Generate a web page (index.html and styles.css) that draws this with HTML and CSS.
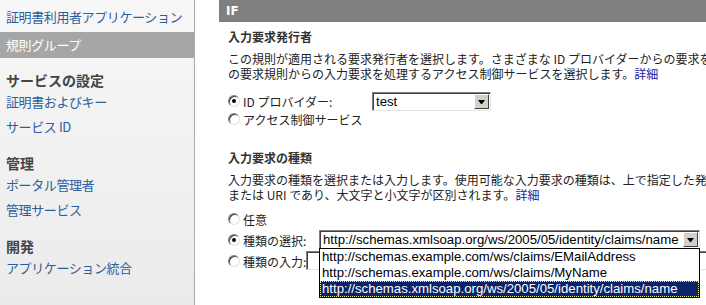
FILE: index.html
```html
<!DOCTYPE html>
<html lang="ja">
<head>
    <meta charset="UTF-8">
    <meta name="viewport" content="width=device-width, initial-scale=1.0">
    <title>規則グループ</title>
    <link rel="stylesheet" href="styles.css">
</head>
<body>
    <div class="page">
        <div class="sidebar">
            <a class="nav-link first" href="#">証明書利用者アプリケーション</a>
            <a class="nav-link selected" href="#">規則グループ</a>
            <div class="nav-group">
                <div class="nav-title">サービスの設定</div>
                <a class="nav-link" href="#">証明書およびキー</a>
                <a class="nav-link" href="#">サービス ID</a>
            </div>
            <div class="nav-group">
                <div class="nav-title">管理</div>
                <a class="nav-link" href="#">ポータル管理者</a>
                <a class="nav-link" href="#">管理サービス</a>
            </div>
            <div class="nav-group">
                <div class="nav-title">開発</div>
                <a class="nav-link" href="#">アプリケーション統合</a>
            </div>
        </div>

        <div class="main">
            <div class="section-bar">IF</div>
            <div class="content">
                <h2>入力要求発行者</h2>
                <p class="desc">
                    この規則が適用される要求発行者を選択します。さまざまな ID プロバイダーからの要求を処理する場合は ID プロバイダーを、他<br>
                    の要求規則からの入力要求を処理するアクセス制御サービスを選択します。<a href="#">詳細</a>
                </p>

                <div class="options issuer">
                    <div class="option-row tall">
                        <span class="radio checked"></span>
                        <span class="label">ID プロバイダー:</span>
                        <div class="select select-small">
                            <span class="select-text">test</span>
                            <span class="select-arrow"></span>
                        </div>
                    </div>
                    <div class="option-row">
                        <span class="radio"></span>
                        <span class="label">アクセス制御サービス</span>
                    </div>
                </div>

                <h2 class="second">入力要求の種類</h2>
                <p class="desc">
                    入力要求の種類を選択または入力します。使用可能な入力要求の種類は、上で指定した発行者から提供される文字列<br>
                    または URI であり、大文字と小文字が区別されます。<a href="#">詳細</a>
                </p>

                <div class="options claim-type">
                    <div class="option-row wide">
                        <span class="radio"></span>
                        <span class="label">任意</span>
                    </div>
                    <div class="option-row wide">
                        <span class="radio checked"></span>
                        <span class="label">種類の選択:</span>
                        <div class="select select-wide">
                            <span class="select-text">http://schemas.xmlsoap.org/ws/2005/05/identity/claims/name</span>
                            <span class="select-arrow"></span>
                            <div class="dropdown">
                                <div class="dropdown-item">http://schemas.example.com/ws/claims/EMailAddress</div>
                                <div class="dropdown-item">http://schemas.example.com/ws/claims/MyName</div>
                                <div class="dropdown-item active">http://schemas.xmlsoap.org/ws/2005/05/identity/claims/name</div>
                            </div>
                        </div>
                    </div>
                    <div class="option-row wide">
                        <span class="radio"></span>
                        <span class="label">種類の入力:</span>
                        <div class="text-input"></div>
                    </div>
                </div>
            </div>
        </div>
    </div>
</body>
</html>
```

FILE: styles.css
```css
html, body {
    margin: 0;
    padding: 0;
    overflow: hidden;
}
body {
    font-family: "Noto Sans CJK JP", "Liberation Sans", sans-serif;
    font-size: 12px;
    color: #222;
    background: #fff;
}
.page {
    display: flex;
    width: 706px;
    height: 305px;
}

/* sidebar */
.sidebar {
    flex: none;
    width: 194px;
    padding-top: 4px;
    border-right: 1px solid #a9a9a9;
    background: linear-gradient(#f7f7f7, #ebebeb);
}
.nav-link {
    display: block;
    height: 25px;
    line-height: 25px;
    padding-left: 6px;
    font-size: 13px;
    letter-spacing: -0.4px;
    color: #2a5f9e;
    text-decoration: none;
    white-space: nowrap;
}
.nav-link.first {
    height: 26px;
    line-height: 26px;
}
.nav-link.selected {
    margin-top: 2px;
    height: 26px;
    line-height: 26px;
    background: #a6a6a6;
    color: #fff;
}
.nav-group {
    margin-top: 15px;
}
.nav-group:first-of-type {
    margin-top: 13px;
}
.nav-title {
    height: 18px;
    line-height: 18px;
    padding-left: 6px;
    font-size: 14px;
    font-weight: bold;
    color: #444;
}

/* main */
.main {
    flex: 1;
    min-width: 0;
    padding-left: 24px;
    overflow: hidden;
}
.section-bar {
    height: 22px;
    line-height: 22px;
    padding-left: 7px;
    background: #808080;
    color: #fff;
    font-family: "DejaVu Sans", sans-serif;
    font-size: 12px;
    font-weight: bold;
}
.content {
    padding-left: 9px;
    white-space: nowrap;
}
h2 {
    margin: 6px 0 0;
    font-size: 12px;
    line-height: 18px;
    font-weight: bold;
    color: #333;
}
h2.second {
    margin-top: 22px;
}
.desc {
    margin: 5px 0 0;
    line-height: 15px;
}
.desc a {
    color: #1a1aa0;
    text-decoration: none;
}

.options.issuer {
    margin-top: 10px;
}
.options.claim-type {
    margin-top: 7px;
}
.option-row {
    display: flex;
    align-items: center;
    height: 16px;
}
.option-row.tall {
    height: 20px;
}
.option-row.wide {
    height: 21px;
    align-items: flex-start;
}
.option-row.wide .radio,
.option-row.wide .label {
    margin-top: 4px;
}
.option-row.wide .label {
    line-height: 13px;
}
.issuer .label {
    width: 129px;
}
.claim-type .label {
    width: 76px;
}

/* classic radio */
.radio {
    position: relative;
    flex: none;
    box-sizing: border-box;
    width: 12px;
    height: 12px;
    margin-right: 3px;
    border: 1px solid;
    border-color: #808080 #e2e2e2 #e2e2e2 #808080;
    border-radius: 50%;
    background: #fff;
    box-shadow: inset 1px 1px 0 #404040;
}
.radio.checked::after {
    content: "";
    position: absolute;
    left: 3px;
    top: 3px;
    width: 4px;
    height: 4px;
    border-radius: 50%;
    background: #000;
}

/* classic select */
.select,
.text-input {
    position: relative;
    flex: none;
    box-sizing: border-box;
    height: 19px;
    border: 1px solid;
    border-color: #7f7f7f #e4e4e4 #e4e4e4 #7f7f7f;
    box-shadow: inset 1px 1px 0 #404040;
    background: #fff;
}
.select {
    padding-left: 3px;
    font-family: "Liberation Sans", Arial, sans-serif;
    font-size: 13.2px;
    line-height: 17px;
    color: #000;
}
.select-small {
    width: 119px;
}
.select-wide {
    width: 381px;
}
.text-input {
    width: 420px;
}
.select-arrow {
    position: absolute;
    right: 1px;
    top: 1px;
    box-sizing: border-box;
    width: 15px;
    height: 15px;
    border: 1px solid;
    border-color: #fff #404040 #404040 #fff;
    background: #d4d0c8;
}
.select-arrow::after {
    content: "";
    position: absolute;
    left: 3px;
    top: 5px;
    width: 1px;
    border-left: 3px solid transparent;
    border-right: 3px solid transparent;
    border-top: 4px solid #000;
}

/* open list */
.dropdown {
    position: absolute;
    left: -1px;
    top: 17px;
    z-index: 2;
    box-sizing: border-box;
    width: 381px;
    border: 1px solid #000;
    background: #fff;
}
.dropdown-item {
    height: 16px;
    line-height: 16px;
    padding-left: 2px;
}
.dropdown-item.active {
    background: #0a246a;
    color: #fff;
    outline: 1px dotted #e8e890;
    outline-offset: -1px;
}
```
